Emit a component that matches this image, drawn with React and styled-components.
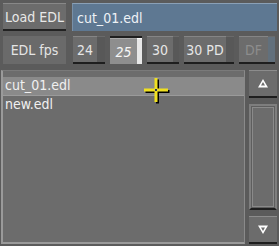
import React from "react";
import styled, { createGlobalStyle, css } from "styled-components";

const Global = createGlobalStyle`
  html, body { margin: 0; padding: 0; background: #5b5b5b; }
  body { font-family: "DejaVu Sans Condensed", "DejaVu Sans", sans-serif; }
`;

const Panel = styled.div`
  position: relative;
  width: 279px;
  height: 246px;
  background: #5b5b5b;
  box-sizing: border-box;
  padding: 3px 2px 0 1px;
  display: flex;
  flex-direction: column;
  gap: 5px;
  overflow: hidden;
`;

const Row = styled.div`
  display: flex;
  align-items: stretch;
  height: 28px;
  padding-left: 2px;
  gap: 6px;
`;

const Button = styled.div`
  width: 63px;
  box-sizing: border-box;
  background: #6c6c6c;
  border-top: 1px solid #888;
  border-bottom: 2px solid #222;
  color: #e8e8e8;
  font-size: 14px;
  display: flex;
  align-items: center;
  justify-content: center;
  flex-shrink: 0;
`;

const Field = styled.div`
  flex: 1;
  box-sizing: border-box;
  background: #5e7892;
  border-top: 1px solid #8aa0b6;
  border-left: 1px solid #7890a8;
  color: #eef2f6;
  font-size: 14px;
  display: flex;
  align-items: center;
  padding-left: 4px;
`;

const Label = styled.div`
  width: 63px;
  background: #6a6a6a;
  color: #e4e4e4;
  font-size: 14px;
  display: flex;
  align-items: center;
  justify-content: center;
  flex-shrink: 0;
`;

const Toggles = styled.div`
  display: flex;
  gap: 5px;
  margin-left: 1px;
`;

const Toggle = styled.div`
  width: ${(p) => p.w}px;
  display: flex;
  box-sizing: border-box;
  ${(p) =>
    p.on
      ? css`border-top: 2px solid #1e1e1e;`
      : css`border-bottom: 2px solid #1e1e1e;`}
`;

const ToggleFace = styled.div`
  flex: 1;
  background: ${(p) => (p.on ? "#8e8e8e" : "#6c6c6c")};
  border-top: 1px solid ${(p) => (p.on ? "#a8a8a8" : "#858585")};
  color: ${(p) => (p.disabled ? "#8d8d8d" : p.on ? "#f6f6f6" : "#e6e6e6")};
  font-style: ${(p) => (p.on ? "italic" : "normal")};
  font-size: 14px;
  display: flex;
  align-items: center;
  justify-content: center;
`;

const ToggleLamp = styled.div`
  width: ${(p) => p.w || 7}px;
  background: ${(p) => (p.on ? "#e8e8e8" : p.disabled ? "#62707c" : "#585858")};
  border-top: 1px solid ${(p) => (p.on ? "#fff" : "#6a6a6a")};
`;

const Body = styled.div`
  display: flex;
  gap: 4px;
  height: 174px;
  margin-top: 1px;
`;

const List = styled.div`
  flex: 1;
  background: #6c6c6c;
  border-left: 2px solid #9a9a9a;
  border-top: 1px solid #7a7a7a;
  border-bottom: 2px solid #9a9a9a;
  border-right: 1px solid #8a8a8a;
  padding-top: 6px;
  box-sizing: border-box;
`;

const Item = styled.div`
  height: 18px;
  line-height: 17px;
  padding-left: 2px;
  font-size: 14px;
  color: #f0f0f0;
  background: ${(p) => (p.selected ? "#8a8a8a" : "transparent")};
  border-bottom: ${(p) => (p.selected ? "1px solid #9a9a9a" : "none")};
`;

const Scroll = styled.div`
  width: 28px;
  display: flex;
  flex-direction: column;
  gap: 6px;
`;

const Arrow = styled.div`
  height: 28px;
  box-sizing: border-box;
  background: #6c6c6c;
  border-top: 1px solid #8c8c8c;
  border-bottom: 2px solid #1e1e1e;
  display: flex;
  align-items: center;
  justify-content: center;
`;

const Track = styled.div`
  flex: 1;
  border: 2px solid #7e7e7e;
  border-bottom-color: #1e1e1e;
  background: #5e5e5e;
  padding: 1px;
  display: flex;
`;

const Thumb = styled.div`
  flex: 1;
  background: #6c6c6c;
  border: 1px solid #8a8a8a;
`;

const Cursor = styled.svg`
  position: absolute;
  left: 141px;
  top: 76px;
  pointer-events: none;
`;

function Tri({ down }) {
  return (
    <svg width="12" height="11" viewBox="0 0 12 11">
      {down ? (
        <path d="M1 1.5 H11 L6 10 Z M4 3.5 L6 7 L8 3.5 Z" fill="#fff" fillRule="evenodd" />
      ) : (
        <path d="M6 1 L11 9.5 H1 Z M6 4 L4 7.5 H8 Z" fill="#fff" fillRule="evenodd" />
      )}
    </svg>
  );
}

export default function App() {
  return (
    <>
      <Global />
      <Panel>
        <Row>
          <Button>Load EDL</Button>
          <Field>cut_01.edl</Field>
        </Row>
        <Row>
          <Label>EDL fps</Label>
          <Toggles>
            <Toggle w={32}>
              <ToggleFace>24</ToggleFace>
              <ToggleLamp w={8} />
            </Toggle>
            <Toggle w={32} on>
              <ToggleFace on>25</ToggleFace>
              <ToggleLamp w={5} on />
            </Toggle>
            <Toggle w={32}>
              <ToggleFace>30</ToggleFace>
              <ToggleLamp w={6} />
            </Toggle>
            <Toggle w={50}>
              <ToggleFace>30 PD</ToggleFace>
              <ToggleLamp w={8} />
            </Toggle>
            <Toggle w={36}>
              <ToggleFace disabled>DF</ToggleFace>
              <ToggleLamp w={7} disabled />
            </Toggle>
          </Toggles>
        </Row>
        <Body>
          <List>
            <Item selected>cut_01.edl</Item>
            <Item>new.edl</Item>
          </List>
          <Scroll>
            <Arrow><Tri /></Arrow>
            <Track><Thumb /></Track>
            <Arrow><Tri down /></Arrow>
          </Scroll>
        </Body>
        <Cursor width="30" height="28" viewBox="0 0 30 28">
          <path d="M15 2 V26 M3 14 H27" stroke="#000" strokeWidth="3" transform="translate(1.5 1.5)" />
          <path d="M15 2 V26 M3 14 H27" stroke="#f0e020" strokeWidth="3" />
          <rect x="14" y="13" width="2" height="2" fill="#203060" />
        </Cursor>
      </Panel>
    </>
  );
}
